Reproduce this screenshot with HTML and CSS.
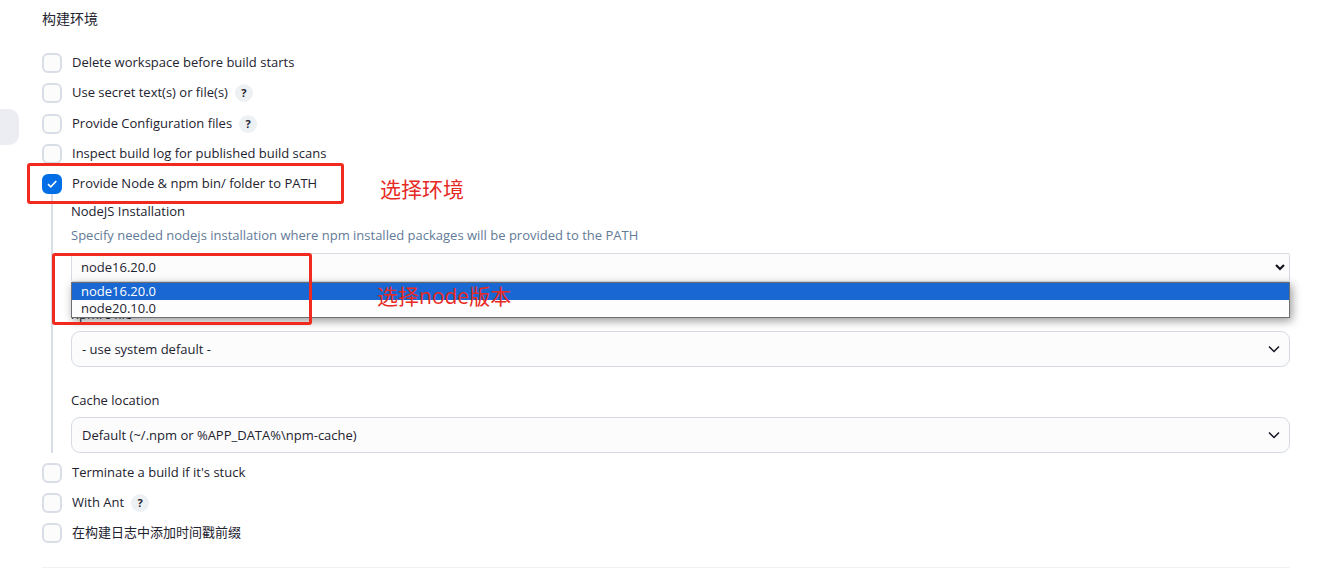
FILE: index.html
```html
<!DOCTYPE html>
<html lang="zh-CN">
<head>
<meta charset="utf-8">
<title>构建环境</title>
<link rel="stylesheet" href="styles.css">
</head>
<body>
<div class="side-item"></div>
<main class="page">
  <form class="section">
    <h2 class="section-title">构建环境</h2>
    <div class="options">
      <div class="option"><input class="check" type="checkbox" id="o1"><label for="o1">Delete workspace before build starts</label></div>
      <div class="option option-tall"><input class="check" type="checkbox" id="o2"><label for="o2">Use secret text(s) or file(s)</label><button class="help" type="button">?</button></div>
      <div class="option"><input class="check" type="checkbox" id="o3"><label for="o3">Provide Configuration files</label><button class="help" type="button">?</button></div>
      <div class="option"><input class="check" type="checkbox" id="o4"><label for="o4">Inspect build log for published build scans</label></div>
      <div class="option">
        <span class="check-wrap"><input class="check" type="checkbox" id="o5" checked><svg class="tick" viewBox="0 0 20 20"><path d="M6 10.2l2.8 2.7L14.3 7"/></svg></span>
        <label for="o5">Provide Node &amp; npm bin/ folder to PATH</label>
        <span class="mark mark-option"></span>
        <span class="note note-option">选择环境</span>
      </div>
    </div>
    <div class="nested">
      <label class="field-label" for="node">NodeJS Installation</label>
      <p class="hint">Specify needed nodejs installation where npm installed packages will be provided to the PATH</p>
      <div class="field field-open">
        <select class="select select-open" id="node"><option>node16.20.0</option><option>node20.10.0</option></select>
        <svg class="arrow arrow-bold" viewBox="0 0 12 12"><path d="M2 4l4 4 4-4"/></svg>
        <ul class="list" role="listbox" aria-label="NodeJS Installation">
          <li class="item item-active" role="option" aria-selected="true">node16.20.0</li>
          <li class="item" role="option" aria-selected="false">node20.10.0</li>
        </ul>
        <span class="mark mark-list"></span>
        <span class="note note-list">选择node版本</span>
      </div>
      <label class="field-label" for="npmrc">npmrc file</label>
      <div class="field field-spaced">
        <select class="select" id="npmrc"><option>- use system default -</option></select>
        <svg class="arrow" viewBox="0 0 12 12"><path d="M1 3.5l5 5 5-5"/></svg>
      </div>
      <label class="field-label" for="cache">Cache location</label>
      <div class="field">
        <select class="select" id="cache"><option>Default (~/.npm or %APP_DATA%\npm-cache)</option></select>
        <svg class="arrow" viewBox="0 0 12 12"><path d="M1 3.5l5 5 5-5"/></svg>
      </div>
    </div>
    <div class="options">
      <div class="option"><input class="check" type="checkbox" id="o6"><label for="o6">Terminate a build if it's stuck</label></div>
      <div class="option"><input class="check" type="checkbox" id="o7"><label for="o7">With Ant</label><button class="help" type="button">?</button></div>
      <div class="option"><input class="check" type="checkbox" id="o8"><label for="o8">在构建日志中添加时间戳前缀</label></div>
    </div>
  </form>
</main>
</body>
</html>
```

FILE: styles.css
```css
* { box-sizing: border-box; }

body {
  margin: 0;
  background: #fff;
  color: #23232f;
  font: 13px/20px "Open Sans", "Noto Sans CJK SC", sans-serif;
}

.side-item {
  position: absolute;
  top: 109px;
  left: 0;
  width: 19px;
  height: 36px;
  border-radius: 0 10px 10px 0;
  background: #ecedf3;
}

.page { padding: 9px 50px 0 42px; }

.section {
  padding-bottom: 24px;
  border-bottom: 1px solid #f0f0f3;
}

.section-title {
  margin: 0 0 24px;
  font-size: 14px;
  font-weight: 400;
  line-height: 20px;
}

.options {
  display: flex;
  flex-direction: column;
  gap: 10px;
}

.option {
  position: relative;
  display: flex;
  align-items: flex-start;
  height: 20px;
  line-height: 18px;
}

.option-tall { height: 21px; }

.check-wrap {
  position: relative;
  display: flex;
}

.check {
  appearance: none;
  flex: none;
  width: 20px;
  height: 20px;
  margin: 0 10px 0 0;
  border: 2px solid #d9dee6;
  border-radius: 6px;
  background: #fcfcfd;
}

.check:checked {
  border-color: #006ee6;
  background: #006ee6;
}

.tick {
  position: absolute;
  top: 0;
  left: 0;
  width: 20px;
  height: 20px;
  fill: none;
  stroke: #fff;
  stroke-width: 1.6;
  pointer-events: none;
}

.help {
  width: 18px;
  height: 18px;
  margin: 1px 0 0 7px;
  padding: 0;
  border: 0;
  border-radius: 50%;
  background: #edf1f4;
  color: #23232f;
  font: 700 11px/18px "Open Sans", sans-serif;
  text-align: center;
}

.nested {
  margin: 0 0 10px 9px;
  padding: 7px 0 0 18px;
  border-left: 2px solid #d9dee6;
}

.field-label {
  display: block;
  line-height: 20px;
}

.hint {
  margin: 4px 0 8px;
  color: #627b98;
}

.field {
  position: relative;
  margin-top: 7px;
}

.field-open { margin: 0 0 22px; }
.field-spaced { margin-bottom: 23px; }

.select {
  appearance: none;
  display: block;
  width: 100%;
  height: 36px;
  padding: 0 36px 0 10px;
  border: 1px solid #d6dbe3;
  border-radius: 9px;
  background: #fcfcfd;
  color: inherit;
  font: inherit;
}

.select-open {
  height: 29px;
  padding-bottom: 2px;
  padding-left: 9px;
  border-radius: 2px;
}

.arrow {
  position: absolute;
  top: 12px;
  right: 10px;
  width: 12px;
  height: 12px;
  fill: none;
  stroke: #14141f;
  stroke-width: 1.5;
  pointer-events: none;
}

.arrow-bold {
  top: 8px;
  right: 4px;
  stroke-width: 2.2;
}

.list {
  position: absolute;
  z-index: 1;
  top: 29px;
  left: 0;
  width: 100%;
  margin: 0;
  padding: 0;
  border: 1px solid #6b6e72;
  background: #fdfdfd;
  box-shadow: 2px 3px 9px rgba(0, 0, 0, .4);
  list-style: none;
}

.item {
  padding-left: 9px;
  line-height: 17px;
}

.item-active {
  background: #1967d2;
  color: #fff;
}

.mark {
  position: absolute;
  z-index: 2;
  border: 3px solid #f12a20;
  border-radius: 3px;
  pointer-events: none;
}

.mark-option {
  top: -11px;
  left: -15px;
  width: 317px;
  height: 41px;
}

.mark-list {
  top: 0;
  left: -19px;
  width: 260px;
  height: 72px;
}

.note {
  position: absolute;
  z-index: 2;
  color: #e62a25;
  font-size: 21px;
  line-height: 30px;
  white-space: nowrap;
}

.note-option {
  top: 0;
  left: 338px;
}

.note-list {
  top: 28px;
  left: 306px;
}
```
